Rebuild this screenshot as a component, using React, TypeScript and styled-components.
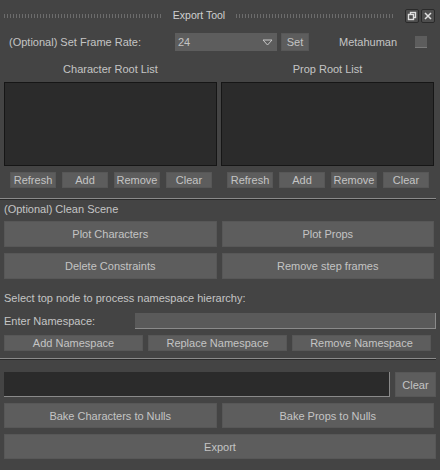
import styled, { createGlobalStyle } from 'styled-components';

const GlobalStyle = createGlobalStyle`
  html, body {
    margin: 0;
    padding: 0;
    background: #444444;
  }
`;

const Window = styled.div`
  width: 440px;
  height: 470px;
  background: #444444;
  color: #c4c4c4;
  font-family: 'Liberation Sans', Arial, sans-serif;
  font-size: 11px;
  overflow: hidden;
  display: flex;
  flex-direction: column;
`;

const TitleBar = styled.div`
  height: 30px;
  display: flex;
  align-items: center;
  padding: 0 5px 0 3px;
  gap: 8px;
`;

const Grip = styled.div`
  flex: 1;
  height: 4px;
  margin-top: 1px;
  background-image: radial-gradient(circle, #6c6c6c 0.7px, transparent 0.9px);
  background-size: 3px 2px;
`;

const Title = styled.span`
  font-size: 10.5px;
  color: #d0d0d0;
  margin: 0 2px;
`;

const TitleButtons = styled.div`
  display: flex;
  gap: 2px;
  margin-left: 2px;
  margin-top: 2px;
`;

const TitleButton = styled.div`
  width: 12px;
  height: 12px;
  border: 1px solid #2a2a2a;
  border-radius: 2px;
  background: #4e4e4e;
  display: flex;
  align-items: center;
  justify-content: center;
`;

const Content = styled.div`
  padding: 0 6px 0 4px;
  display: flex;
  flex-direction: column;
`;

const FrameRow = styled.div`
  margin-top: 3px;
  height: 18px;
  display: flex;
  align-items: center;
`;

const FrameLabel = styled.span`
  width: 171px;
  padding-left: 5px;
  box-sizing: border-box;
`;

const Combo = styled.div`
  width: 102px;
  height: 18px;
  background: #5d5d5d;
  display: flex;
  align-items: center;
  justify-content: space-between;
  padding: 0 4px 0 3px;
  box-sizing: border-box;
  margin-right: 4px;
`;

const Button = styled.button<{ $h?: number }>`
  height: ${(p) => p.$h ?? 26}px;
  background: #5d5d5d;
  border: none;
  border-radius: 1px;
  box-shadow: inset 0 0 0 1px #575757;
  color: #c4c4c4;
  font-family: inherit;
  font-size: 11px;
  padding: 0;
  cursor: pointer;
  white-space: nowrap;
`;

const SetButton = styled(Button)`
  width: 28px;
`;

const MetaLabel = styled.span`
  margin-left: 30px;
`;

const Checkbox = styled.div`
  margin-left: auto;
  margin-right: 7px;
  width: 12px;
  height: 12px;
  background: #5d5d5d;
  border-bottom: 1px solid #7a7a7a;
  box-sizing: border-box;
`;

const TwoCols = styled.div`
  display: grid;
  grid-template-columns: 1fr 1fr;
  column-gap: 4px;
`;

const ListCol = styled.div`
  display: flex;
  flex-direction: column;
`;

const ListHeader = styled.div`
  text-align: center;
  height: 18px;
  line-height: 18px;
  margin-top: 9px;
  margin-bottom: 4px;
`;

const ListBox = styled.div`
  height: 84px;
  background: #2b2b2b;
  border: 1px solid #161616;
  box-sizing: border-box;
`;

const ListButtons = styled.div`
  display: grid;
  grid-template-columns: repeat(4, 46px);
  gap: 6px;
  padding-left: 6px;
  margin-top: 6px;
`;

const Separator = styled.div<{ $top: number }>`
  margin: ${(p) => p.$top}px -6px 0 -4px;
  width: 436px;
  height: 2px;
  border-top: 1px solid #8a8a8a;
  border-bottom: 1px solid #2a2a2a;
  box-sizing: border-box;
`;

const SectionLabel = styled.div<{ $top: number }>`
  margin-top: ${(p) => p.$top}px;
  height: 14px;
  line-height: 14px;
`;

const ButtonGrid = styled.div<{ $top: number }>`
  display: grid;
  grid-template-columns: repeat(2, 1fr);
  gap: 6px 5px;
  margin-top: ${(p) => p.$top}px;
`;

const NamespaceRow = styled.div`
  display: flex;
  align-items: center;
  height: 16px;
  margin-top: 8px;
`;

const NamespaceLabel = styled.span`
  width: 131px;
`;

const NamespaceInput = styled.div`
  flex: 1;
  height: 16px;
  margin-right: -2px;
  background: #5a5a5a;
  border-right: 1px solid #8a8a8a;
  border-bottom: 1px solid #8a8a8a;
  box-sizing: border-box;
`;

const NamespaceButtons = styled.div`
  display: grid;
  grid-template-columns: repeat(3, 139px);
  gap: 5px;
  margin-top: 6px;
`;

const OutputRow = styled.div`
  display: flex;
  gap: 5px;
  margin-top: 12px;
  margin-right: -2px;
`;

const OutputField = styled.div`
  flex: 1;
  height: 25px;
  background: #2b2b2b;
  border-right: 1px solid #8a8a8a;
  border-bottom: 1px solid #8a8a8a;
  box-sizing: border-box;
`;

const ClearButton = styled(Button)`
  width: 41px;
`;

const ExportButton = styled(Button)`
  margin-top: 6px;
  margin-right: -2px;
`;

function RestoreIcon() {
  return (
    <svg width="10" height="10" viewBox="0 0 10 10">
      <rect x="3.5" y="1.5" width="5" height="5" fill="none" stroke="#e0e0e0" strokeWidth="1.4" />
      <rect x="1.5" y="3.5" width="5" height="5" fill="#4e4e4e" stroke="#e0e0e0" strokeWidth="1.4" />
    </svg>
  );
}

function CloseIcon() {
  return (
    <svg width="10" height="10" viewBox="0 0 10 10">
      <path d="M2 2 L8 8 M8 2 L2 8" stroke="#e0e0e0" strokeWidth="1.5" />
    </svg>
  );
}

function ComboArrow() {
  return (
    <svg width="11" height="7" viewBox="0 0 11 7">
      <path d="M1 1 L10 1 L5.5 6 Z" fill="none" stroke="#c8c8c8" strokeWidth="1" />
    </svg>
  );
}

function RootList({ title }: { title: string }) {
  return (
    <ListCol>
      <ListHeader>{title}</ListHeader>
      <ListBox />
      <ListButtons>
        <Button $h={16}>Refresh</Button>
        <Button $h={16}>Add</Button>
        <Button $h={16}>Remove</Button>
        <Button $h={16}>Clear</Button>
      </ListButtons>
    </ListCol>
  );
}

function App() {
  return (
    <>
      <GlobalStyle />
      <Window>
        <TitleBar>
          <Grip />
          <Title>Export Tool</Title>
          <Grip />
          <TitleButtons>
            <TitleButton>
              <RestoreIcon />
            </TitleButton>
            <TitleButton>
              <CloseIcon />
            </TitleButton>
          </TitleButtons>
        </TitleBar>
        <Content>
          <FrameRow>
            <FrameLabel>(Optional) Set Frame Rate:</FrameLabel>
            <Combo>
              <span>24</span>
              <ComboArrow />
            </Combo>
            <SetButton $h={18}>Set</SetButton>
            <MetaLabel>Metahuman</MetaLabel>
            <Checkbox />
          </FrameRow>

          <TwoCols>
            <RootList title="Character Root List" />
            <RootList title="Prop Root List" />
          </TwoCols>

          <Separator $top={10} />

          <SectionLabel $top={2}>(Optional) Clean Scene</SectionLabel>
          <ButtonGrid $top={5}>
            <Button>Plot Characters</Button>
            <Button>Plot Props</Button>
            <Button>Delete Constraints</Button>
            <Button>Remove step frames</Button>
          </ButtonGrid>

          <SectionLabel $top={12}>Select top node to process namespace hierarchy:</SectionLabel>
          <NamespaceRow>
            <NamespaceLabel>Enter Namespace:</NamespaceLabel>
            <NamespaceInput />
          </NamespaceRow>
          <NamespaceButtons>
            <Button $h={16}>Add Namespace</Button>
            <Button $h={16}>Replace Namespace</Button>
            <Button $h={16}>Remove Namespace</Button>
          </NamespaceButtons>

          <Separator $top={7} />

          <OutputRow>
            <OutputField />
            <ClearButton $h={25}>Clear</ClearButton>
          </OutputRow>
          <ButtonGrid $top={6}>
            <Button $h={25}>Bake Characters to Nulls</Button>
            <Button $h={25}>Bake Props to Nulls</Button>
          </ButtonGrid>
          <ExportButton $h={25}>Export</ExportButton>
        </Content>
      </Window>
    </>
  );
}

export default App;
